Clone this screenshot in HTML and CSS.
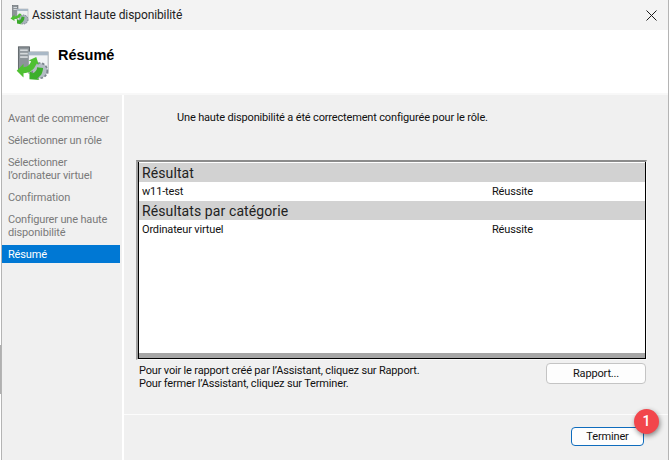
FILE: index.html
```html
<!DOCTYPE html>
<html lang="fr">
<head>
  <meta charset="UTF-8">
  <title>Assistant Haute disponibilité</title>
  <link rel="stylesheet" href="styles.css">
</head>
<body>
  <!-- bit of the window behind, sticks out on the left -->
  <div class="behind-edge"></div>
  <div class="window">
    <div class="titlebar">
      <svg class="title-icon" width="20" height="20" viewBox="0 0 40 40">
        <rect x="7" y="1" width="11" height="26" fill="#8d9499" stroke="#555c60"/>
        <rect x="9" y="4" width="7" height="2" fill="#d5d9dc"/>
        <rect x="9" y="8" width="7" height="2" fill="#d5d9dc"/>
        <rect x="16" y="8" width="22" height="23" fill="#eef0f2" stroke="#9aa0a5"/>
        <rect x="16" y="8" width="22" height="4" fill="#a9b8c6"/>
        <circle cx="29" cy="29" r="9" fill="#a8b2bb" stroke="#7c868e" stroke-width="2" stroke-dasharray="3 2"/>
        <path d="M3 27l8-8v4c4 0 7-2 9-6l5 1c-2 7-7 10-14 10v4z" fill="#4fbf35"/>
        <path d="M16 37v-9l4 3c3-1 5-4 5-8l6 1c0 6-3 11-8 13l3 2z" fill="#3aa92a"/>
      </svg>
      <span class="title-text">Assistant Haute disponibilité</span>
      <svg class="close-icon" width="11" height="11" viewBox="0 0 11 11">
        <path d="M0.5 0.5l10 10M10.5 0.5l-10 10" stroke="#1a1a1a" stroke-width="1" fill="none"/>
      </svg>
    </div>

    <div class="header">
      <svg class="header-icon" width="34" height="34" viewBox="0 0 40 40">
        <rect x="4" y="1" width="13" height="28" fill="#8d9499" stroke="#555c60"/>
        <rect x="6" y="4" width="9" height="2" fill="#d5d9dc"/>
        <rect x="6" y="8" width="9" height="2" fill="#d5d9dc"/>
        <rect x="6" y="12" width="9" height="2" fill="#d5d9dc"/>
        <rect x="16" y="7" width="23" height="25" fill="#f1f3f5" stroke="#9aa0a5"/>
        <rect x="16" y="7" width="23" height="4" fill="#a9b8c6"/>
        <circle cx="29" cy="29" r="9" fill="#b4bdc5" stroke="#7c868e" stroke-width="2" stroke-dasharray="3 2"/>
        <circle cx="29" cy="29" r="3.5" fill="#e6eaed"/>
        <path d="M2 29l8-8v4c4 0 7-2 9-7l-3-1 9-4 3 9-3-1c-2 7-8 11-15 11v5z" fill="#4fc032"/>
        <path d="M17 39v-10l4 3c3-1 5-4 5-7l7 1c0 6-3 10-7 12l3 2z" fill="#3caf2c"/>
      </svg>
      <h1 class="header-title">Résumé</h1>
    </div>

    <div class="main">
      <nav class="sidebar">
        <div class="step">Avant de commencer</div>
        <div class="step">Sélectionner un rôle</div>
        <div class="step">Sélectionner<br>l’ordinateur virtuel</div>
        <div class="step">Confirmation</div>
        <div class="step">Configurer une haute<br>disponibilité</div>
        <div class="step active">Résumé</div>
      </nav>

      <div class="content">
        <div class="content-body">
          <p class="message">Une haute disponibilité a été correctement configurée pour le rôle.</p>
          <div class="results">
            <div class="section">Résultat</div>
            <div class="row"><span class="row-name">w11-test</span><span>Réussite</span></div>
            <div class="section">Résultats par catégorie</div>
            <div class="row"><span class="row-name">Ordinateur virtuel</span><span>Réussite</span></div>
          </div>
          <div class="report">
            <p class="report-text">Pour voir le rapport créé par l’Assistant, cliquez sur Rapport.<br>Pour fermer l’Assistant, cliquez sur Terminer.</p>
            <button class="btn btn-report">Rapport...</button>
          </div>
        </div>
        <div class="footer">
          <div class="finish-wrap">
            <button class="btn btn-finish">Terminer</button>
            <span class="badge">1</span>
          </div>
        </div>
      </div>
    </div>
  </div>
</body>
</html>
```

FILE: styles.css
```css
* {
  box-sizing: border-box;
  margin: 0;
  padding: 0;
}

html, body {
  height: 100%;
  overflow: hidden;
}

body {
  background: #fff;
  font-family: Roboto, "Liberation Sans", sans-serif;
  font-size: 11px;
  letter-spacing: -0.16px;
  color: #111;
}

.behind-edge {
  position: absolute;
  left: 0;
  top: 345px;
  width: 1px;
  height: 49px;
  background: #b0b0b0;
}

.window {
  height: 460px;
  margin-left: 1px;
  margin-right: 1px;
  display: flex;
  flex-direction: column;
  border-left: 1px solid #b4b4b4;
  border-right: 1px solid #b4b4b4;
  background: #f0f0f0;
}

.titlebar {
  height: 30px;
  flex: none;
  display: flex;
  align-items: center;
  padding-left: 7px;
  padding-right: 11px;
  background: #f3f3f3;
}

.title-icon {
  margin-right: 3px;
}

.title-text {
  font-size: 12px;
  letter-spacing: -0.1px;
  flex: 1;
  color: #222;
}

.header {
  height: 63px;
  flex: none;
  display: flex;
  align-items: flex-start;
  padding: 16px 0 0 13px;
  background: #fff;
}

.header-title {
  font-family: "Liberation Sans", sans-serif;
  font-size: 14.5px;
  letter-spacing: 0;
  font-weight: 700;
  color: #000;
  margin-left: 9px;
  margin-top: 1px;
}

.main {
  flex: 1;
  display: flex;
  border-top: 2px solid #f8f8f8;
  min-height: 0;
}

.sidebar {
  width: 120px;
  flex: none;
  padding: 17px 2px 0 0;
  color: #7a7a7a;
  line-height: 13px;
  white-space: nowrap;
}

.step {
  padding: 0 4px 0 6px;
  margin-bottom: 9px;
}

.step.active {
  height: 18px;
  margin-top: -3px;
  padding: 0 6px;
  line-height: 19px;
  background: #0078d4;
  color: #fff;
}

.content {
  flex: 1;
  display: flex;
  flex-direction: column;
  border-left: 2px solid #fff;
}

.content-body {
  flex: 1;
  padding: 15px 21px 0 12px;
}

.message {
  margin-left: 41px;
  height: 50px;
  line-height: 16px;
}

.results {
  height: 200px;
  background: #fff;
  border-top: 2px solid #8c8c8c;
  border-left: 2px solid #a0a0a0;
  border-right: 1px solid #fafafa;
  border-bottom: 1px solid #fafafa;
  box-shadow: inset 1px 0 0 #000, inset -1px 0 0 #000, inset 0 -1px 0 #000, inset 0 -6px 0 #a6a6a6;
  padding: 1px 1px 0 1px;
}

.section {
  height: 19px;
  line-height: 21px;
  padding-left: 3px;
  background: #d2d2d2;
  font-size: 14px;
  letter-spacing: 0.1px;
  color: #222;
}

.row {
  height: 19px;
  line-height: 19px;
  padding-left: 3px;
  display: flex;
}

.row-name {
  width: 350px;
}

.report {
  display: flex;
  justify-content: space-between;
  padding-top: 3px;
  padding-left: 3px;
}

.report-text {
  font-size: 11px;
  letter-spacing: -0.17px;
  line-height: 13px;
  padding-top: 1px;
  color: #111;
}

.btn {
  font-family: inherit;
  font-size: 11px;
  letter-spacing: -0.16px;
  color: #111;
  background: #fdfdfd;
  border: 1px solid #c4c4c4;
  border-radius: 4px;
}

.btn-report {
  width: 100px;
  height: 21px;
  margin-right: 1px;
}

.footer {
  height: 46px;
  flex: none;
  display: flex;
  justify-content: flex-end;
  align-items: flex-start;
  padding: 12px 24px 0 0;
  border-top: 1px solid #fcfcfc;
}

.finish-wrap {
  position: relative;
}

.btn-finish {
  display: block;
  width: 73px;
  height: 19px;
  border-color: #0f6cbd;
}

.badge {
  position: absolute;
  right: -15px;
  top: -18px;
  width: 25px;
  height: 25px;
  border-radius: 50%;
  background: #f2464c;
  color: #fff;
  font-weight: 500;
  font-size: 14px;
  line-height: 25px;
  text-align: center;
  box-shadow: 1px 2px 5px rgba(0, 0, 0, 0.45);
}
```
